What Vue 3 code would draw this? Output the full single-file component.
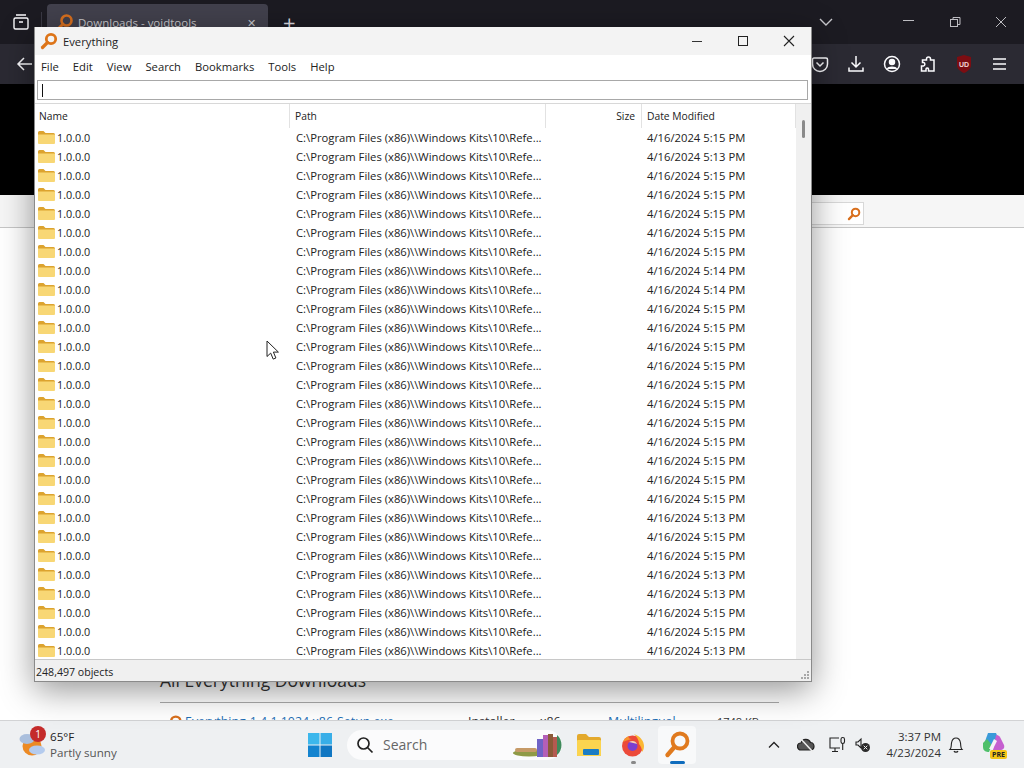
<script setup>
const dates = [
  '5:15', '5:13', '5:15', '5:15', '5:15', '5:15', '5:15', '5:14', '5:14', '5:15',
  '5:15', '5:15', '5:15', '5:15', '5:15', '5:15', '5:15', '5:15', '5:15', '5:15',
  '5:13', '5:15', '5:15', '5:13', '5:13', '5:15', '5:15', '5:13'
]
const rows = dates.map((time) => `4/16/2024 ${time} PM`)
const menus = ['File', 'Edit', 'View', 'Search', 'Bookmarks', 'Tools', 'Help']
</script>

<template>
  <div class="screen">
    <div class="browser">
      <div class="tabstrip">
        <div class="tabs-btn">
          <svg width="20" height="20" viewBox="0 0 20 20" fill="none" stroke="#fbfbfe" stroke-width="1.4">
            <rect x="3" y="6" width="14" height="11" rx="1.5" />
            <path d="M5 3h10M8 10h4" />
          </svg>
        </div>
        <div class="tab">
          <svg width="18" height="18" viewBox="0 0 18 18" fill="none">
            <circle cx="10.5" cy="7.5" r="5" stroke="#d9701e" stroke-width="2.6" />
            <path d="M7 11l-4.5 4.5" stroke="#d9701e" stroke-width="3" stroke-linecap="round" />
          </svg>
          <span class="tab__title">Downloads - voidtools</span>
          <span class="tab__close">✕</span>
        </div>
        <span class="tab-plus">+</span>
        <svg class="tab-list" width="16" height="16" viewBox="0 0 16 16" fill="none" stroke="#c8c8cc" stroke-width="1.4">
          <path d="M2 5l6 6 6-6" />
        </svg>
        <div class="caption">
          <svg width="14" height="14" viewBox="0 0 14 14" fill="none" stroke="#bdbdc2"><path d="M1 5.500h11" /></svg>
          <svg width="14" height="14" viewBox="0 0 14 14" fill="none" stroke="#bdbdc2"><rect x="2.500" y="4.500" width="7" height="7" /><path d="M5 4.500V2.500h7v7h-2.500" /></svg>
          <svg width="14" height="14" viewBox="0 0 14 14" fill="none" stroke="#bdbdc2"><path d="M2 2l10 10M12 2L2 12" /></svg>
        </div>
      </div>
      <div class="toolbar">
        <svg width="20" height="20" viewBox="0 0 20 20" fill="none" stroke="#fbfbfe" stroke-width="1.5">
          <path d="M17 10H3M9 4l-6 6 6 6" />
        </svg>
        <div class="toolbar__right">
          <svg width="18" height="18" viewBox="0 0 18 18" fill="none" stroke="#fbfbfe" stroke-width="1.5">
            <path d="M3 3h12a1.500 1.500 0 0 1 1.500 1.500V9a7.500 7.500 0 0 1-15 0V4.500A1.500 1.500 0 0 1 3 3z" />
            <path d="M5.500 7.500L9 11l3.500-3.500" />
          </svg>
          <svg width="18" height="18" viewBox="0 0 18 18" fill="none" stroke="#fbfbfe" stroke-width="1.5">
            <path d="M9 1v11M4.500 7.500L9 12l4.500-4.500M2 12.500V16h14v-3.500" />
          </svg>
          <svg width="18" height="18" viewBox="0 0 18 18" fill="none" stroke="#fbfbfe" stroke-width="1.5">
            <circle cx="9" cy="9" r="7.500" />
            <circle cx="9" cy="7" r="2.500" fill="#fbfbfe" />
            <path d="M4.500 14c1-2.500 8-2.500 9 0" fill="#fbfbfe" />
          </svg>
          <svg width="18" height="18" viewBox="0 0 18 18" fill="none" stroke="#fbfbfe" stroke-width="1.5">
            <path d="M7 16H2.500v-5h2a1.800 1.800 0 0 0 0-3.500h-1V5h4V4a2 2 0 0 1 4 0v1h3.500v11H9.500v-2a1.300 1.300 0 0 0-2.500 0z" />
          </svg>
          <svg width="18" height="20" viewBox="0 0 18 20">
            <path d="M9 1l7 2v8c0 4-3.500 6.500-7 8-3.500-1.500-7-4-7-8V3z" fill="#7c0d12" />
            <text x="9" y="12.500" text-anchor="middle" class="ublock">UD</text>
          </svg>
          <svg width="18" height="18" viewBox="0 0 18 18" fill="none" stroke="#fbfbfe" stroke-width="1.6">
            <path d="M2 4h13M2 9h13M2 14h13" />
          </svg>
        </div>
      </div>
      <div class="black-band"></div>
      <div class="site-search">
        <div class="site-search__box">
          <svg width="14" height="14" viewBox="0 0 18 18" fill="none">
            <circle cx="11" cy="7" r="4.800" stroke="#d9701e" stroke-width="2.600" />
            <path d="M7.500 10.500l-5 5" stroke="#d9701e" stroke-width="3" stroke-linecap="round" />
          </svg>
        </div>
      </div>
      <div class="page">
        <h2 class="page__heading">All Everything Downloads</h2>
        <div class="page__rule"></div>
        <div class="page__row">
          <svg width="14" height="14" viewBox="0 0 18 18" fill="none">
            <circle cx="10" cy="8" r="6" stroke="#d9701e" stroke-width="3" />
          </svg>
          <a class="page__link">Everything-1.4.1.1024.x86-Setup.exe</a>
          <span class="page__cell page__cell--type">Installer</span>
          <span class="page__cell page__cell--arch">x86</span>
          <a class="page__link page__link--lang">Multilingual</a>
          <span class="page__cell page__cell--size">1748 KB</span>
        </div>
      </div>
    </div>

    <div class="taskbar">
      <div class="weather">
        <svg width="26" height="28" viewBox="0 0 26 28">
          <circle cx="13" cy="15" r="9.500" fill="#ec8a24" />
          <ellipse cx="8" cy="8" rx="7.500" ry="5" fill="#aabfdd" />
          <ellipse cx="18" cy="19" rx="8" ry="4.500" fill="#b4cbee" />
        </svg>
        <span class="weather__badge">1</span>
        <div class="weather__text">
          <span class="weather__temp">65°F</span>
          <span class="weather__desc">Partly sunny</span>
        </div>
      </div>
      <div class="task-center">
        <svg width="24" height="24" viewBox="0 0 24 24">
          <rect x="0" y="0" width="11.500" height="11.500" fill="#3cb7ec" />
          <rect x="12.500" y="0" width="11.500" height="11.500" fill="#38aee8" />
          <rect x="0" y="12.500" width="11.500" height="11.500" fill="#1383cf" />
          <rect x="12.500" y="12.500" width="11.500" height="11.500" fill="#1076c2" />
        </svg>
        <div class="searchbox">
          <svg width="18" height="18" viewBox="0 0 18 18" fill="none" stroke="#222" stroke-width="1.700">
            <circle cx="7.500" cy="7.500" r="5.500" />
            <path d="M11.500 11.500l5 5" />
          </svg>
          <span>Search</span>
          <svg class="books" width="50" height="24" viewBox="0 0 50 24">
            <ellipse cx="16" cy="20" rx="16" ry="3.500" fill="#8f9a46" />
            <rect x="2" y="15" width="22" height="4" rx="2" fill="#c69a67" />
            <rect x="24" y="6" width="6" height="18" fill="#6f63c6" />
            <rect x="30" y="2" width="5" height="22" fill="#b45fb7" />
            <rect x="35" y="1" width="5" height="23" fill="#8b5a38" />
            <rect x="40" y="4" width="4" height="20" fill="#b45a50" />
            <path d="M44 2c6 5 6 15 0 20z" fill="#3f8a5b" />
          </svg>
        </div>
        <div class="app">
          <svg width="26" height="24" viewBox="0 0 26 24">
            <path d="M1 3a2 2 0 0 1 2-2h7l3 3h10a2 2 0 0 1 2 2v16a1 1 0 0 1-1 1H2a1 1 0 0 1-1-1z" fill="#e3a92c" />
            <rect x="1" y="7" width="24" height="16" rx="1" fill="#fbd44f" />
            <rect x="7" y="16" width="16" height="6" rx="1" fill="#1a7cc4" />
          </svg>
        </div>
        <div class="app">
          <svg width="24" height="24" viewBox="0 0 24 24">
            <circle cx="11.500" cy="13" r="10.500" fill="#ec4a3a" />
            <path d="M13 1c6 2 10 7 10 12 0 3-1 5-2 6 0-3-1-6-3-8 0-4-2-7-5-10z" fill="#fbb732" />
            <path d="M2 9c1-3 3-5 6-6-1 2 0 3 3 3-4 1-7 2-9 3z" fill="#f7932e" />
            <circle cx="11.500" cy="13" r="5" fill="#7b3fd0" />
            <path d="M8 9c3-2 7-1 8 2-2-1-5-1-8-2z" fill="#fdd0a8" />
          </svg>
          <i class="app__dot"></i>
        </div>
        <div class="app app--active">
          <svg width="26" height="28" viewBox="0 0 26 28" fill="none">
            <circle cx="16" cy="10" r="7.500" stroke="#e07a1e" stroke-width="3.800" />
            <path d="M10 16.500L3.500 24" stroke="#e07a1e" stroke-width="4.400" stroke-linecap="round" />
          </svg>
          <i class="app__bar"></i>
        </div>
      </div>
      <div class="tray">
        <svg width="14" height="14" viewBox="0 0 14 14" fill="none" stroke="#222" stroke-width="1.300"><path d="M2 9.500L7 4.500l5 5" /></svg>
        <svg class="tray__cloud" width="18" height="16" viewBox="0 0 18 16" fill="#555" stroke="#222" stroke-width="1.200">
          <path d="M4 13a3.500 3.500 0 0 1 0-7 5 5 0 0 1 9.500-.500 3.800 3.800 0 0 1 .500 7.500z" />
          <path d="M3 1l13 14" stroke="#eee" stroke-width="1.500" />
        </svg>
        <svg class="tray__net" width="18" height="18" viewBox="0 0 18 18" fill="none" stroke="#222" stroke-width="1.100">
          <path d="M11 2H2v10h10M7 12v3M4 15.500h6" />
          <rect x="13" y="1.500" width="3.500" height="6" rx="1.700" />
          <path d="M14.700 7.500V14" />
        </svg>
        <svg class="tray__vol" width="16" height="16" viewBox="0 0 16 16">
          <path d="M1 5h2l3-3v9l-3-3H1z" fill="none" stroke="#222" stroke-width="1.100" />
          <circle cx="10.500" cy="10.500" r="4.500" fill="#2b2b2b" />
          <path d="M8.700 8.700l3.600 3.600M12.300 8.700l-3.600 3.600" stroke="#eee" stroke-width="1" />
        </svg>
        <div class="clock">
          <span>3:37 PM</span>
          <span>4/23/2024</span>
        </div>
        <svg width="16" height="18" viewBox="0 0 16 18" fill="none" stroke="#222" stroke-width="1.100">
          <path d="M2 13.500c1.500-1.500 1-3 1.500-6.500C4 4 6 2 8 2s4 2 4.500 5c.5 3.500 0 5 1.500 6.500zM6 15c.5 1.500 3.500 1.500 4 0" />
        </svg>
        <div class="copilot">
          <svg width="24" height="24" viewBox="0 0 24 24">
            <path d="M7 1h8l3 7-6 7H2z" fill="#3a9ad9" />
            <path d="M15 3c3 0 4 2 5 4l3 6c1 3-1 5-4 5h-7z" fill="#c55fd0" />
            <path d="M2 11l4-4 5 6-3 7c-3 0-6-1-6-5z" fill="#4fc06a" />
            <path d="M13 7l3 2-4 8H8z" fill="#f6f0f8" />
          </svg>
          <span class="copilot__pre">PRE</span>
        </div>
      </div>
    </div>

    <div class="window">
      <div class="titlebar">
        <svg width="18" height="18" viewBox="0 0 18 18" fill="none">
          <circle cx="11" cy="7" r="4.700" stroke="#dd7418" stroke-width="2.800" />
          <path d="M7.500 10.500L2.500 15.500" stroke="#dd7418" stroke-width="3.200" stroke-linecap="round" />
        </svg>
        <span>Everything</span>
        <div class="titlebar__btns">
          <svg width="12" height="12" viewBox="0 0 12 12" stroke="#333"><path d="M1 6.500h10" /></svg>
          <svg width="12" height="12" viewBox="0 0 12 12" fill="none" stroke="#222"><rect x="1.500" y="1.500" width="9" height="9" /></svg>
          <svg width="12" height="12" viewBox="0 0 12 12" stroke="#222" stroke-width="1.100"><path d="M1 1l10 10M11 1L1 11" /></svg>
        </div>
      </div>
      <div class="menubar">
        <span v-for="menu in menus" :key="menu">{{ menu }}</span>
      </div>
      <div class="searchrow">
        <div class="searchrow__input"><i class="caret"></i></div>
      </div>
      <div class="body">
        <div class="results">
          <div class="head">
            <span class="cell cell--name">Name</span>
            <span class="cell cell--path">Path</span>
            <span class="cell cell--size">Size</span>
            <span class="cell cell--date">Date Modified</span>
          </div>
          <div v-for="(date, index) in rows" :key="index" class="row">
            <span class="cell cell--name">
              <svg width="17" height="13" viewBox="0 0 17 13">
                <path d="M0 1.500A1.500 1.500 0 0 1 1.500 0h4l2 2h8A1.500 1.500 0 0 1 17 3.500V4H0z" fill="#dca32f" />
                <path d="M0 3.500h17V12a1 1 0 0 1-1 1H1a1 1 0 0 1-1-1z" fill="#f8d775" />
              </svg>
              <span class="version">1.0.0.0</span>
            </span>
            <span class="cell cell--path">C:\Program Files (x86)\\Windows Kits\10\Refe...</span>
            <span class="cell cell--size"></span>
            <span class="cell cell--date">{{ date }}</span>
          </div>
        </div>
        <div class="scrollbar"><i class="scrollbar__thumb"></i></div>
      </div>
      <div class="status">
        <span>248,497 objects</span>
        <svg class="grip" width="10" height="10" viewBox="0 0 10 10" fill="#a8a8a8">
          <rect x="7" y="1" width="2" height="2" />
          <rect x="4" y="4" width="2" height="2" />
          <rect x="7" y="4" width="2" height="2" />
          <rect x="1" y="7" width="2" height="2" />
          <rect x="4" y="7" width="2" height="2" />
          <rect x="7" y="7" width="2" height="2" />
        </svg>
      </div>
    </div>

    <svg class="cursor" width="14" height="21" viewBox="0 0 14 21">
      <path d="M1 1v15.500l3.700-3.400 2.500 6 2.700-1.100-2.500-5.900h5z" fill="#fff" stroke="#222" stroke-width="1" stroke-linejoin="round" />
    </svg>
  </div>
</template>

<style scoped>
.screen {
  position: relative;
  display: flex;
  flex-direction: column;
  width: 1024px;
  height: 768px;
  overflow: hidden;
  font-family: "Open Sans", "Noto Sans", sans-serif;
  background: #fff;
}

.browser {
  display: flex;
  flex-direction: column;
  flex: 1;
  min-height: 0;
  overflow: hidden;
}

.tabstrip {
  display: flex;
  align-items: center;
  height: 44px;
  padding-right: 16px;
  background: #1c1b22;
}

.tabs-btn {
  display: flex;
  justify-content: center;
  width: 41px;
  border-right: 1px solid #3a3944;
}

.tab {
  display: flex;
  align-items: center;
  gap: 4px;
  width: 221px;
  height: 36px;
  margin-left: 5px;
  padding: 0 12px 0 9px;
  border-radius: 4px;
  box-sizing: border-box;
  background: #42414d;
  color: #c8c8cc;
}

.tab__title {
  flex: 1;
  font-size: 11.5px;
}

.tab__close {
  font-size: 11px;
}

.tab-plus {
  margin-left: 15px;
  font-size: 22px;
  color: #dcdce0;
}

.tab-list {
  margin-left: 522px;
}

.caption {
  display: flex;
  gap: 32px;
  margin-left: auto;
}

.toolbar {
  display: flex;
  align-items: center;
  justify-content: space-between;
  height: 40px;
  padding: 0 15px;
  box-sizing: border-box;
  background: #2b2a33;
}

.toolbar__right {
  display: flex;
  align-items: center;
  gap: 18px;
}

.ublock {
  font-family: "Liberation Sans", sans-serif;
  font-size: 7px;
  font-weight: 700;
  fill: #f3d6d6;
}

.black-band {
  height: 111px;
  background: #000;
}

.site-search {
  display: flex;
  justify-content: flex-end;
  height: 33px;
  padding: 7px 160px 0 0;
  border-bottom: 1px solid #c6c6c6;
  box-sizing: border-box;
  background: #f6f6f6;
}

.site-search__box {
  display: flex;
  align-items: center;
  justify-content: flex-end;
  width: 60px;
  height: 21px;
  padding-right: 2px;
  border: 1px solid #d8d8d8;
  background: #fff;
}

.page {
  flex: 1;
  min-height: 0;
  padding: 440px 245px 0 160px;
  background: #fff;
}

.page__heading {
  margin: 0;
  font-size: 17.500px;
  font-weight: 400;
  line-height: 24px;
  color: #333;
}

.page__rule {
  height: 1px;
  margin-top: 10px;
  margin-bottom: 10px;
  background: #aaa;
}

.page__row {
  display: flex;
  align-items: center;
  gap: 3px;
  margin-left: 8px;
  font-size: 12.400px;
  white-space: nowrap;
  color: #333;
}

.page__link {
  width: 280px;
  color: #1f6fb5;
}

.page__cell--type {
  width: 69px;
}

.page__cell--arch {
  width: 65px;
}

.page__link--lang {
  width: 106px;
}

.page__cell--size {
  font-size: 11px;
}

.taskbar {
  display: flex;
  align-items: center;
  height: 48px;
  padding: 0 19px 0 19px;
  border-top: 1px solid #d2d3d5;
  box-sizing: border-box;
  background: #eef0f2;
}

.weather {
  position: relative;
  display: flex;
  align-items: center;
  gap: 5px;
  width: 240px;
  flex-shrink: 0;
}

.weather__badge {
  position: absolute;
  left: 11px;
  top: -3px;
  width: 16px;
  height: 16px;
  border-radius: 50%;
  background: #c42b2b;
  color: #fff;
  font-size: 10px;
  line-height: 16px;
  text-align: center;
}

.weather__text {
  display: flex;
  flex-direction: column;
  font-size: 11.600px;
  line-height: 16px;
}

.weather__temp {
  color: #222;
}

.weather__desc {
  color: #555;
}

.task-center {
  display: flex;
  align-items: center;
  margin-left: 49px;
}

.searchbox {
  position: relative;
  display: flex;
  align-items: center;
  gap: 9px;
  width: 215px;
  height: 30px;
  margin-left: 15px;
  padding-left: 9px;
  border-radius: 15px;
  box-sizing: border-box;
  background: #fbfbfc;
  font-size: 14px;
  color: #666;
}

.books {
  position: absolute;
  right: -1px;
  top: 3px;
}

.app {
  position: relative;
  display: flex;
  align-items: center;
  justify-content: center;
  width: 38px;
  height: 38px;
  margin-left: 6px;
}

.searchbox + .app {
  margin-left: 8px;
}

.app--active {
  border-radius: 4px;
  background: #f8f9fa;
}

.app__dot,
.app__bar {
  position: absolute;
  bottom: 0;
  height: 3px;
  border-radius: 2px;
}

.app__dot {
  width: 5px;
  background: #888;
}

.app__bar {
  width: 15px;
  background: #0f6cbd;
}

.tray {
  display: flex;
  align-items: center;
  gap: 7px;
  margin-left: auto;
}

.tray__cloud {
  margin-left: 9px;
}

.tray__net {
  margin-left: 6px;
}

.tray__vol {
  margin-left: 2px;
}

.clock {
  display: flex;
  flex-direction: column;
  align-items: flex-end;
  margin-left: 9px;
  font-size: 11.500px;
  line-height: 16px;
  color: #333;
}

.copilot {
  position: relative;
  width: 24px;
  height: 26px;
  margin-left: 10px;
}

.copilot__pre {
  position: absolute;
  right: -2px;
  bottom: -1px;
  padding: 0 2px;
  border-radius: 2px;
  background: #f5c518;
  color: #222;
  font-size: 7px;
  font-weight: 700;
  line-height: 9px;
}

.window {
  position: absolute;
  left: 34px;
  top: 27px;
  display: flex;
  flex-direction: column;
  width: 778px;
  height: 655px;
  box-sizing: border-box;
  border: 1px solid #8a8a8a;
  border-width: 0 1px 1px;
  background: #fff;
  box-shadow: 0 8px 32px rgba(0, 0, 0, 0.42);
  color: #222;
  font-size: 11.250px;
}

.titlebar {
  display: flex;
  align-items: center;
  gap: 5px;
  height: 28px;
  padding-left: 5px;
  box-sizing: border-box;
  background: #f3f3f3;
  flex-shrink: 0;
}

.titlebar__btns {
  display: flex;
  gap: 34px;
  margin-left: auto;
  margin-right: 16px;
}

.menubar {
  display: flex;
  gap: 14px;
  height: 22px;
  padding-left: 6px;
  align-items: center;
  flex-shrink: 0;
}

.searchrow {
  padding: 3px 3px 3px 2px;
  border-bottom: 1px solid #d8d8d8;
  flex-shrink: 0;
}

.searchrow__input {
  display: flex;
  align-items: center;
  height: 20px;
  padding-left: 4px;
  border: 1px solid #a8a8a8;
  box-sizing: border-box;
}

.caret {
  width: 1px;
  height: 13px;
  background: #111;
}

.body {
  display: flex;
  flex: 1;
  min-height: 0;
}

.results {
  flex: 1;
  min-width: 0;
  overflow: hidden;
}

.head {
  display: flex;
  height: 24px;
  align-items: center;
  font-size: 10.300px;
}

.head .cell {
  height: 24px;
  line-height: 24px;
  box-sizing: border-box;
  padding-left: 5px;
  border-right: 1px solid #e2e2e2;
}

.head .cell--name {
  padding-left: 4px;
}

.head .cell--size {
  padding-right: 6px;
}

.head .cell--date {
  flex: 1;
}

.row {
  display: flex;
  height: 19px;
  align-items: center;
  white-space: nowrap;
}

.cell {
  display: flex;
  align-items: center;
  flex-shrink: 0;
}

.cell--name {
  width: 255px;
  gap: 2px;
  padding-left: 3px;
  box-sizing: border-box;
}

.version {
  font-size: 10.800px;
}

.cell--path {
  width: 256px;
  padding-left: 6px;
  box-sizing: border-box;
}

.cell--size {
  justify-content: flex-end;
  width: 96px;
  box-sizing: border-box;
}

.cell--date {
  padding-left: 5px;
}

.scrollbar {
  position: relative;
  width: 15px;
  background: #f0f0f0;
  flex-shrink: 0;
}

.scrollbar__thumb {
  position: absolute;
  left: 6px;
  top: 16px;
  width: 3px;
  height: 18px;
  border-radius: 2px;
  background: #8a8a8a;
}

.status {
  display: flex;
  align-items: center;
  justify-content: space-between;
  height: 22px;
  padding: 2px 1px 0 1px;
  border-top: 1px solid #c8c8c8;
  box-sizing: border-box;
  background: #f0f0f0;
  flex-shrink: 0;
  font-size: 10.600px;
}

.grip {
  align-self: flex-end;
  margin-bottom: 1px;
}

.cursor {
  position: absolute;
  left: 266px;
  top: 340px;
}
</style>

<style>
html,
body {
  margin: 0;
  background: #fff;
}
</style>
